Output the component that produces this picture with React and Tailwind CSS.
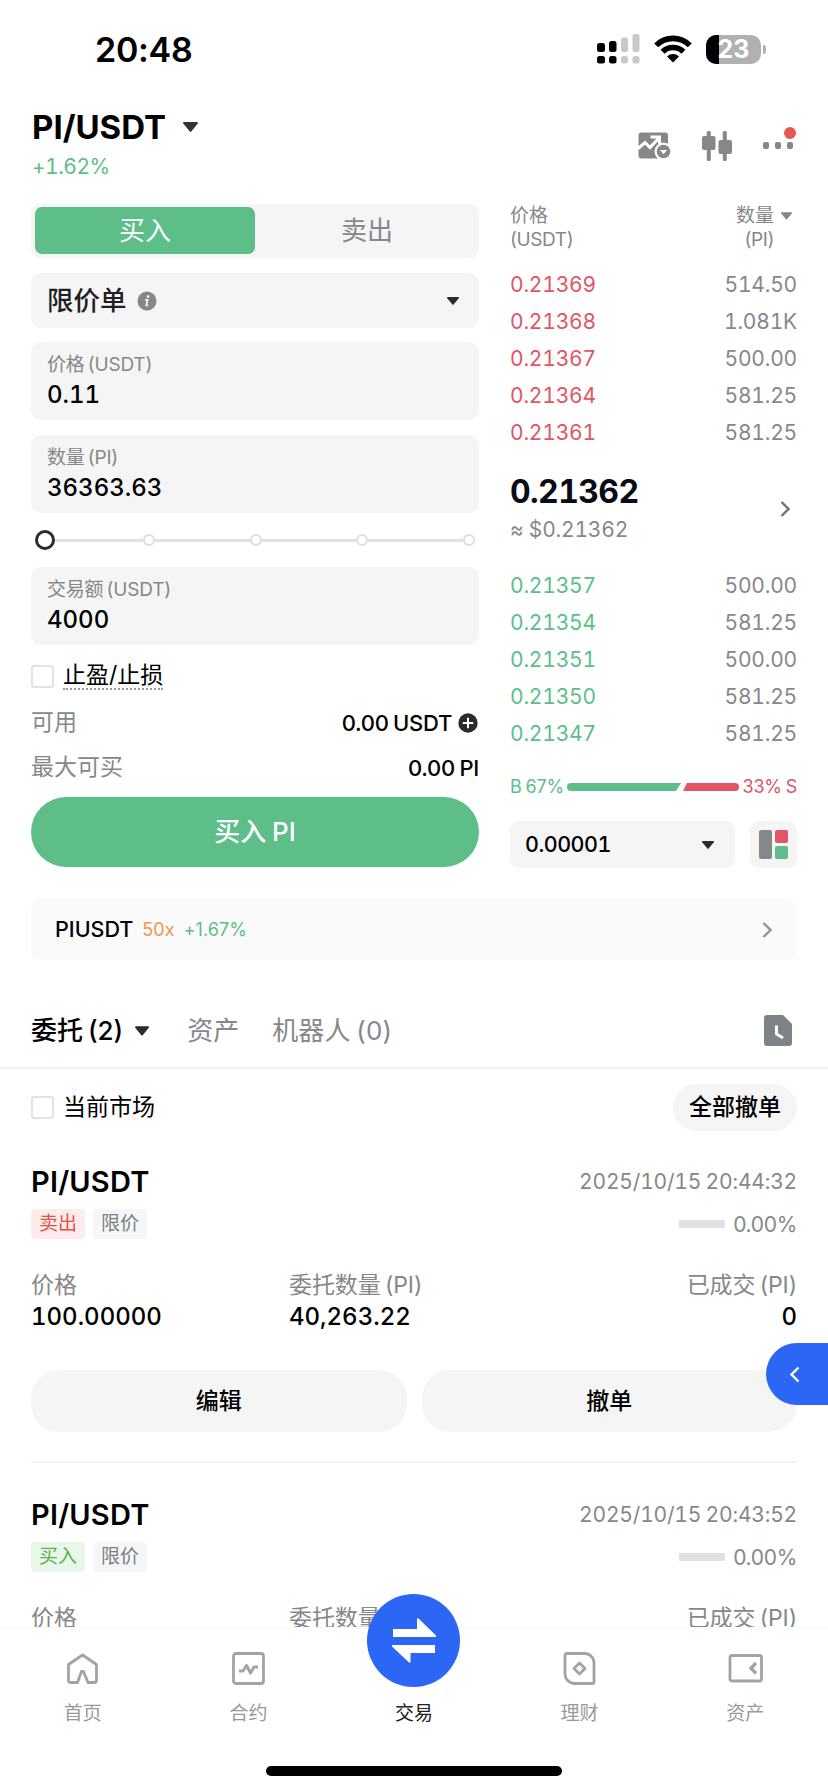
import React, { useState } from "react";

const ASKS = [
  { price: "0.21369", amount: "514.50" },
  { price: "0.21368", amount: "1.081K" },
  { price: "0.21367", amount: "500.00" },
  { price: "0.21364", amount: "581.25" },
  { price: "0.21361", amount: "581.25" },
];

const BIDS = [
  { price: "0.21357", amount: "500.00" },
  { price: "0.21354", amount: "581.25" },
  { price: "0.21351", amount: "500.00" },
  { price: "0.21350", amount: "581.25" },
  { price: "0.21347", amount: "581.25" },
];

const ORDERS = [
  { id: 1, pair: "PI/USDT", side: "sell", time: "2025/10/15 20:44:32", price: "100.00000", amount: "40,263.22", filled: "0" },
  { id: 2, pair: "PI/USDT", side: "buy", time: "2025/10/15 20:43:52" },
];

const Caret = ({ className = "" }) => (
  <svg viewBox="0 0 12 8" className={`shrink-0 ${className}`} fill="currentColor">
    <path d="M0.8 0h10.4c.7 0 1 .7.6 1.2L6.6 7.6a.8.8 0 0 1-1.2 0L.2 1.2C-.2.7.1 0 .8 0z" />
  </svg>
);

const Chevron = ({ className = "" }) => (
  <svg viewBox="0 0 10 16" className={`shrink-0 ${className}`} fill="none" stroke="currentColor" strokeWidth="2.4">
    <path d="M1.5 1l7 7-7 7" />
  </svg>
);

const StatusBar = () => (
  <div className="h-[98px] shrink-0 flex items-center justify-between pl-[95px] pr-[62px]">
    <span className="mt-[2px] text-[34px] leading-none font-semibold tracking-[-0.3px]">20:48</span>
    <div className="flex items-center">
      {/* Dual SIM signal */}
      <svg width="43" height="30" viewBox="0 0 43 30">
        <rect x="0" y="9" width="8" height="9" rx="2.5" />
        <rect x="12" y="7" width="7.5" height="11" rx="2.5" />
        <rect x="24" y="3.5" width="7" height="14.5" rx="2" fill="#c9c9c9" />
        <rect x="35.5" y="0" width="7" height="18" rx="2" fill="#c9c9c9" />
        <rect x="0" y="22" width="8" height="7.5" rx="2.5" />
        <rect x="12" y="22" width="7.5" height="7.5" rx="2.5" />
        <rect x="24" y="22" width="7" height="7.5" rx="2.5" fill="#c9c9c9" />
        <rect x="35.5" y="22" width="7" height="7.5" rx="2.5" fill="#c9c9c9" />
      </svg>
      <svg width="38" height="28" viewBox="0 0 38 28" className="ml-3.5" fill="none" stroke="#000" strokeWidth="5.6">
        <path d="M2.2 10.4A23.5 23.5 0 0 1 35.8 10.4" />
        <path d="M8.6 16.8A14.8 14.8 0 0 1 29.4 16.8" />
        <path d="M19 27.5l-6-6a8.5 8.5 0 0 1 12 0z" fill="#000" stroke="none" />
      </svg>
      <div className="relative ml-3.5 w-[55px] h-[29px] rounded-[10px] bg-[#b1b1b1] overflow-hidden flex items-center justify-center">
        <div className="absolute left-0 top-0 h-full w-[13px] bg-black" />
        <span className="relative text-[25px] leading-none font-bold text-white">23</span>
      </div>
      <div className="ml-[2px] w-[3px] h-[9px] rounded-r-full bg-[#b1b1b1]" />
    </div>
  </div>
);

const Header = () => (
  <div className="h-[106px] shrink-0 flex justify-between pl-8 pr-[31px]">
    <div>
      <div className="h-[58px] flex items-center">
        <h1 className="text-[33px] leading-none font-bold">PI/USDT</h1>
        <Caret className="ml-[17px] w-[15px] h-[10px] text-[#333]" />
      </div>
      <p className="text-[21px] leading-[21px] text-[#5dbe8a] tracking-[-0.5px] tabular-nums">+1.62%</p>
    </div>
    <div className="h-[96px] flex items-center text-[#85888b] pb-[1px]">
      <svg width="33" height="27" viewBox="0 0 33 27">
        <rect x="0.5" y="0.5" width="29.5" height="26" rx="3" fill="currentColor" />
        <path d="M0 16.5l7-6 5 5 8.5-9" fill="none" stroke="#fff" strokeWidth="3" />
        <path d="M12.5 5h9v7" fill="none" stroke="#fff" strokeWidth="3" />
        <circle cx="25.5" cy="19.5" r="9" fill="#fff" />
        <circle cx="25.5" cy="19.5" r="6.8" fill="currentColor" />
        <path d="M22 18h7l-3.5 4.2z" fill="#fff" />
      </svg>
      <svg width="30" height="30" viewBox="0 0 30 30" className="ml-[31px]" fill="currentColor">
        <rect x="4.8" y="0" width="4" height="30" rx="1.5" />
        <rect x="0" y="5" width="13.5" height="14" rx="2" />
        <rect x="20.8" y="0" width="4" height="30" rx="1.5" />
        <rect x="16.5" y="9" width="13.5" height="14" rx="2" />
      </svg>
      <div className="relative ml-[31px] mr-[4px] flex gap-[5.5px]">
        <span className="w-[6.5px] h-[6.5px] rounded-[2px] bg-current" />
        <span className="w-[6.5px] h-[6.5px] rounded-[2px] bg-current" />
        <span className="w-[6.5px] h-[6.5px] rounded-[2px] bg-current" />
        <span className="absolute -top-[15px] left-[21px] w-3 h-3 rounded-full bg-[#e55a50]" />
      </div>
    </div>
  </div>
);

const Field = ({ label, value, className = "" }) => (
  <div className={`h-[78px] rounded-[10px] bg-[#f5f5f5] px-4 pt-[11px] ${className}`}>
    <p className="text-[19px] leading-6 text-[#85888b] tracking-[-0.2px] [word-spacing:-2px]">{label}</p>
    <p className="mt-[4px] text-[24px] leading-[28px] font-medium tabular-nums">{value}</p>
  </div>
);

const Slider = () => (
  <div className="h-[54px] flex items-center pl-[4px] pr-1">
    <span className="w-5 h-5 rounded-full border-[3px] border-[#2b2b2b] bg-white" />
    {[0, 1, 2, 3].map((i) => (
      <React.Fragment key={i}>
        <span className={`h-[3px] bg-[#e2e2e2] ${i === 0 ? "w-[88px]" : "flex-1"}`} />
        <span className="w-3 h-3 rounded-full border-2 border-[#dedede] bg-white" />
      </React.Fragment>
    ))}
  </div>
);

const OrderForm = () => {
  const [side, setSide] = useState("buy");

  return (
    <section className="w-[448px]">
      {/* Buy / sell switch */}
      <div className="h-[54px] rounded-[9px] bg-[#f5f5f5] pl-1 py-[3px] flex text-[26px]">
        <button
          onClick={() => setSide("buy")}
          className={`w-[220px] h-[47px] rounded-[7px] leading-none ${side === "buy" ? "bg-[#5dbe8a] text-white" : "text-[#85888b]"}`}
        >
          买入
        </button>
        <button
          onClick={() => setSide("sell")}
          className={`flex-1 h-[47px] rounded-[7px] leading-none ${side === "sell" ? "bg-[#e15564] text-white" : "text-[#85888b]"}`}
        >
          卖出
        </button>
      </div>

      <div className="mt-[15px] h-[55px] rounded-[10px] bg-[#f5f5f5] pl-4 pr-[20px] flex items-center">
        <span className="text-[26.5px] leading-none font-medium text-[#1f1f24]">限价单</span>
        <svg width="20" height="20" viewBox="0 0 20 20" className="ml-[10px]">
          <circle cx="10" cy="10" r="9.5" fill="#85888b" />
          <circle cx="11" cy="5.5" r="1.3" fill="#fff" />
          <path d="M8 8.7h2.6L9.2 14.5h2" fill="none" stroke="#fff" strokeWidth="1.6" />
        </svg>
        <Caret className="ml-auto w-3 h-2 text-[#2b2b2b]" />
      </div>

      <Field label="价格 (USDT)" value="0.11" className="mt-[14px]" />
      <Field label="数量 (PI)" value="36363.63" className="mt-[15px]" />
      <Slider />
      <Field label="交易额 (USDT)" value="4000" />

      <label className="mt-[7px] h-[48px] flex items-center">
        <span className="w-[23px] h-[23px] rounded-[3px] border-2 border-[#e2e2e2] bg-white" />
        <span className="ml-[9px] h-[27px] text-[23px] leading-[25px] border-b-2 border-dotted border-[#999]">止盈/止损</span>
      </label>
      <div className="h-[45px] flex items-center justify-between text-[23px]">
        <span className="text-[#85888b]">可用</span>
        <span className="flex items-center text-[22px] leading-none font-medium">
          <span className="tracking-[-0.3px] [word-spacing:-1px]">0.00 USDT</span>
          <svg width="20" height="20" viewBox="0 0 20 20" className="ml-1.5 mr-[1px]">
            <circle cx="10" cy="10" r="9.7" fill="#2b2b2b" />
            <path d="M10 4.8v10.4M4.8 10h10.4" stroke="#fff" strokeWidth="2" />
          </svg>
        </span>
      </div>
      <div className="h-[45px] flex items-center justify-between text-[23px]">
        <span className="text-[#85888b]">最大可买</span>
        <span className="text-[22px] leading-none font-medium tracking-[-0.3px] [word-spacing:-1px]">0.00 PI</span>
      </div>
      <button className="mt-[7px] w-full h-[70px] rounded-full bg-[#5dbe8a] text-white text-[26px] leading-none font-medium [word-spacing:-1px]">
        买入 PI
      </button>
    </section>
  );
};

const BookRow = ({ price, amount, color }) => (
  <div className="h-[37px] flex items-center justify-between text-[21px] leading-none tracking-[-0.2px] tabular-nums">
    <span className={color}>{price}</span>
    <span className="text-[#85888b]">{amount}</span>
  </div>
);

const OrderBook = () => (
  <section className="w-[287px]">
    <div className="h-[62px] flex justify-between text-[19px] leading-6 text-[#85888b]">
      <div>
        <p>价格</p>
        <p className="tracking-[-0.4px]">(USDT)</p>
      </div>
      <div className="flex items-start pr-[5px]">
        <div className="text-right">
          <p>数量</p>
          <p className="tracking-[-0.4px]">(PI)</p>
        </div>
        <Caret className="ml-[7px] mt-2 w-[11px] h-2" />
      </div>
    </div>

    {ASKS.map((row) => (
      <BookRow key={row.price} {...row} color="text-[#e15564]" />
    ))}

    <div className="h-[116px] flex items-center justify-between pr-[7px]">
      <div className="pt-[4px]">
        <p className="text-[32px] leading-[36px] font-bold tracking-[-0.6px] text-[#0b0b18] tabular-nums">0.21362</p>
        <p className="mt-[2px] text-[21px] leading-[36px] tracking-[-0.2px] text-[#85888b] tabular-nums">≈ $0.21362</p>
      </div>
      <Chevron className="w-[10px] h-[16px] text-[#6f7275]" />
    </div>

    {BIDS.map((row) => (
      <BookRow key={row.price} {...row} color="text-[#5dbe8a]" />
    ))}

    {/* Buy / sell pressure */}
    <div className="mt-[18px] h-[34px] flex items-center justify-between text-[18px] leading-none tracking-[-0.2px] [word-spacing:-1px]">
      <span className="text-[#5dbe8a]">B 67%</span>
      <svg width="172" height="8" viewBox="0 0 172 8" className="shrink-0">
        <path d="M4 0h110l-5 8H4a4 4 0 0 1 0-8z" fill="#5dbe8a" />
        <path d="M120 0h48a4 4 0 0 1 0 8h-52z" fill="#e15564" />
      </svg>
      <span className="text-[#e15564]">33% S</span>
    </div>

    <div className="mt-[17px] flex justify-between">
      <div className="w-[225px] h-[47px] rounded-[9px] bg-[#f5f5f5] pl-[15px] pr-[21px] flex items-center justify-between">
        <span className="text-[21.5px] leading-none font-medium tracking-[-0.5px] tabular-nums">0.00001</span>
        <Caret className="w-3 h-2 text-[#2b2b2b]" />
      </div>
      <div className="w-[47px] h-[47px] rounded-[9px] bg-[#f5f5f5] flex items-center justify-center gap-[3px]">
        <span className="w-[13px] h-[29px] rounded-[2px] bg-[#85888b]" />
        <div className="flex flex-col gap-[3px]">
          <span className="w-[13px] h-[13px] rounded-[2px] bg-[#e15564]" />
          <span className="w-[13px] h-[13px] rounded-[2px] bg-[#5dbe8a]" />
        </div>
      </div>
    </div>
  </section>
);

const OrderCard = ({ order }) => (
  <article className="h-[333px] shrink-0">
    <div className="h-[50px] flex items-end justify-between">
      <h2 className="h-[35px] text-[29px] leading-[35px] font-semibold tracking-[0.2px]">{order.pair}</h2>
      <span className="h-[35px] text-[21px] leading-[36px] text-[#85888b] tracking-[-0.2px] [word-spacing:-1px] tabular-nums">{order.time}</span>
    </div>
    <div className="mt-[10px] h-[30px] flex items-center justify-between">
      <div className="flex gap-2 text-[19px] leading-[30px] text-center">
        {order.side === "sell" ? (
          <span className="w-[54px] rounded-[4px] bg-[#fdeceb] text-[#e0524a]">卖出</span>
        ) : (
          <span className="w-[54px] rounded-[4px] bg-[#e9f7ea] text-[#58b04b]">买入</span>
        )}
        <span className="w-[54px] rounded-[4px] bg-[#f5f6f7] text-[#7c7f83]">限价</span>
      </div>
      <div className="flex items-center gap-2 text-[21px] leading-none text-[#85888b]">
        <span className="w-[46px] h-2 rounded-[1px] bg-[#dfe1e2]" />
        <span className="tracking-[-0.3px]">0.00%</span>
      </div>
    </div>
    <div className="mt-[29px] grid grid-cols-[258px_1fr_auto] text-[23px] leading-[34px] text-[#85888b] tracking-[-0.1px] [word-spacing:-2px]">
      <span>价格</span>
      <span>委托数量 (PI)</span>
      <span className="text-right">已成交 (PI)</span>
    </div>
    {order.price && (
      <>
        <div className="grid grid-cols-[258px_1fr_auto] text-[24px] leading-[30px] font-medium tabular-nums">
          <span>{order.price}</span>
          <span>{order.amount}</span>
          <span className="text-right">{order.filled}</span>
        </div>
        <div className="mt-[38px] grid grid-cols-2 gap-[15px] text-[23px] font-medium">
          <button className="h-[62px] rounded-[28px] bg-[#f5f5f5]">编辑</button>
          <button className="h-[62px] rounded-[28px] bg-[#f5f5f5]">撤单</button>
        </div>
        <div className="mt-[29px] h-[2px] bg-[#f3f3f3]" />
      </>
    )}
  </article>
);

const Orders = () => (
  <section className="shrink-0 flex flex-col">
    <div className="mt-[34px] h-[75px] border-b-2 border-[#f2f2f2] pl-[31px] pr-[36px] flex items-center text-[26px] leading-none text-[#85888b]">
      <span className="font-medium text-black [word-spacing:-2px]">委托 (2)</span>
      <Caret className="ml-[12px] w-[14px] h-[10px] text-[#2b2b2b]" />
      <span className="ml-[38px]">资产</span>
      <span className="ml-[33px] tracking-[0.2px] [word-spacing:-2px]">机器人 (0)</span>
      <svg width="28" height="31" viewBox="0 0 28 31" className="ml-auto">
        <path d="M3 0h16l9 9v19a3 3 0 0 1-3 3H3a3 3 0 0 1-3-3V3a3 3 0 0 1 3-3z" fill="#7f8386" />
        <path d="M12.5 10.5v8.5l6.5 4" fill="none" stroke="#fff" strokeWidth="3" />
      </svg>
    </div>
    <div className="mt-[15px] h-[47px] px-[31px] flex items-center justify-between text-[23px]">
      <label className="flex items-center leading-none">
        <span className="w-[23px] h-[23px] rounded-[3px] border-2 border-[#e2e2e2] bg-white" />
        <span className="ml-[9px]">当前市场</span>
      </label>
      <button className="w-[124px] h-[47px] rounded-full bg-[#f5f5f5] font-medium">全部撤单</button>
    </div>
    <div className="mt-[18px] px-[31px]">
      {ORDERS.map((order) => (
        <OrderCard key={order.id} order={order} />
      ))}
    </div>
  </section>
);

const HomeIcon = () => (
  <path d="M9 31.5H5.5a2 2 0 0 1-2-2V13.5l14-9.5 14 9.5v16a2 2 0 0 1-2 2H23l-4.5-11h-2L12.5 31.5z" />
);
const FuturesIcon = () => (
  <>
    <rect x="2.5" y="2.5" width="30" height="30" rx="2.5" />
    <path d="M8 20h4l3.5-5.5 4 7.5 3.5-6h4" strokeWidth="3" />
  </>
);
const EarnIcon = () => (
  <>
    <path d="M5 2.5h17.5a9.5 9.5 0 0 1 9.5 9.5v18.5a2 2 0 0 1-2 2H12a9.5 9.5 0 0 1-9-9.5V4.5a2 2 0 0 1 2-2z" />
    <path d="M17.5 12l5.5 5.5-5.5 5.5-5.5-5.5z" />
  </>
);
const WalletIcon = () => (
  <>
    <rect x="2" y="4.5" width="31.5" height="25.5" rx="2" />
    <path d="M28 12l-5 5.2 5 5.2" strokeWidth="3.4" strokeLinejoin="miter" />
  </>
);

const NAV = [
  { label: "首页", icon: HomeIcon },
  { label: "合约", icon: FuturesIcon },
  { label: "交易", active: true },
  { label: "理财", icon: EarnIcon },
  { label: "资产", icon: WalletIcon },
];

const BottomNav = () => (
  <nav className="absolute left-0 bottom-0 w-full h-[165px] bg-white border-t border-[#fafafa]">
    <div className="grid grid-cols-5">
      {NAV.map(({ label, icon: Icon, active }) => (
        <div key={label} className="h-[100px] pt-[22px] flex flex-col items-center">
          {active ? (
            <div className="-mt-[56px] w-[93px] h-[93px] shrink-0 rounded-full bg-[#2b66f4] flex items-center justify-center">
              <svg width="44" height="45" viewBox="0 0 44 45" fill="#fff">
                <path d="M1 11h24V.5h1.500L44 17.500v1.500H1z" />
                <path d="M43 27v8H18.500v9.500H17L0 28.500V27z" />
              </svg>
            </div>
          ) : (
            <svg width="35" height="37" viewBox="0 0 35 35" className="text-[#a3a3a3]" fill="none" stroke="currentColor" strokeWidth="2.8" strokeLinejoin="round">
              <Icon />
            </svg>
          )}
          <span className={`mt-[15px] text-[19px] leading-6 ${active ? "text-[#222]" : "text-[#999]"}`}>{label}</span>
        </div>
      ))}
    </div>
    <div className="mt-[38px] mx-auto w-[296px] h-[10px] rounded-full bg-black" />
  </nav>
);

const App = () => (
  <main className="relative w-[828px] h-[1792px] overflow-hidden bg-white text-black font-['Inter','Noto_Sans_CJK_SC',sans-serif] flex flex-col">
    <StatusBar />
    <Header />
    <div className="shrink-0 px-[31px] flex justify-between">
      <OrderForm />
      <OrderBook />
    </div>
    <div className="shrink-0 mt-[31px] mx-[31px] h-[61px] rounded-[10px] bg-[#fafafa] pl-6 pr-[25px] flex items-center leading-none">
      <span className="text-[21.5px] font-medium">PIUSDT</span>
      <span className="ml-[9px] text-[18px] text-[#ee9550]">50x</span>
      <span className="ml-[9px] text-[18px] tracking-[0.1px] text-[#5dbe8a]">+1.67%</span>
      <Chevron className="ml-auto w-[10px] h-[16px] text-[#909396]" />
    </div>
    <Orders />

    {/* Floating side handle */}
    <button className="absolute right-0 top-[1343px] w-[62px] h-[62px] rounded-l-[31px] bg-[#2b66f4] text-white flex items-center justify-center pr-1">
      <Chevron className="w-[10px] h-[17px] rotate-180" />
    </button>
    <BottomNav />
  </main>
);

export default App;
